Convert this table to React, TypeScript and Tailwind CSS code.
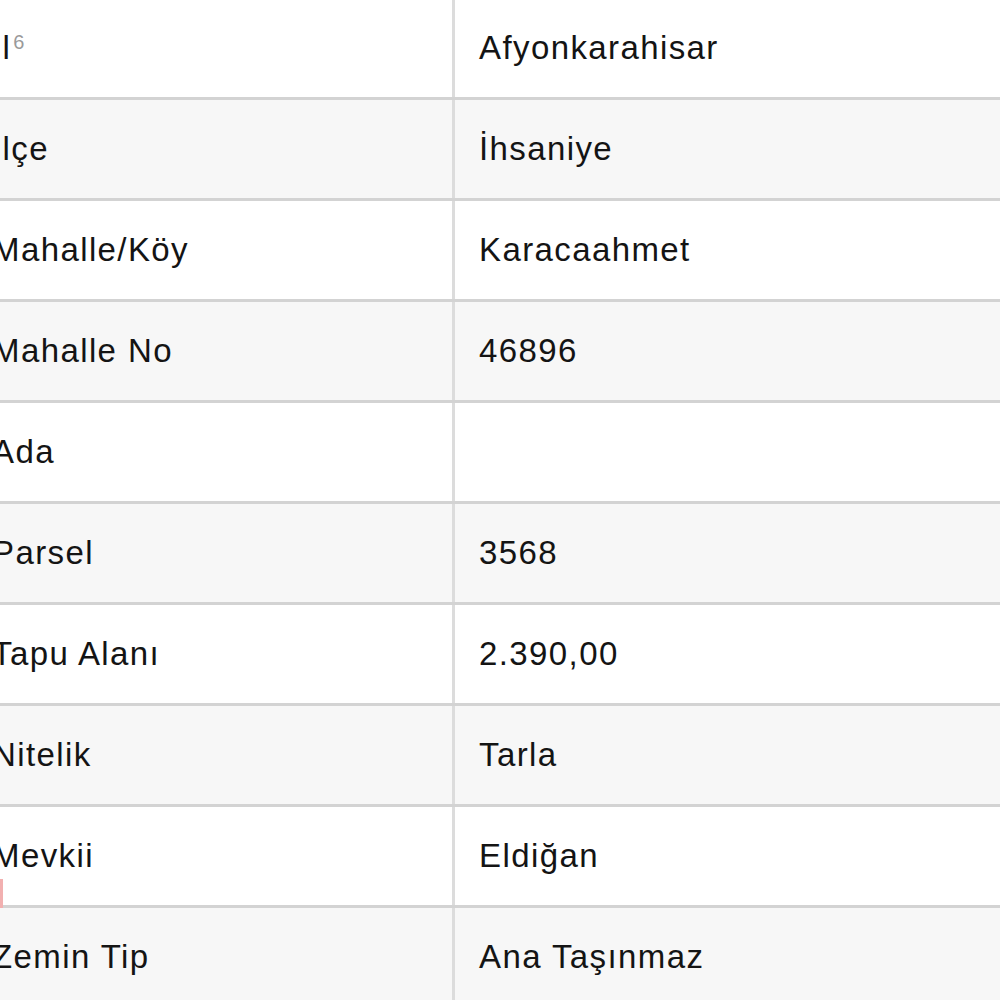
const rows: [string, string][] = [
  ["İl", "Afyonkarahisar"],
  ["İlçe", "İhsaniye"],
  ["Mahalle/Köy", "Karacaahmet"],
  ["Mahalle No", "46896"],
  ["Ada", ""],
  ["Parsel", "3568"],
  ["Tapu Alanı", "2.390,00"],
  ["Nitelik", "Tarla"],
  ["Mevkii", "Eldiğan"],
  ["Zemin Tip", "Ana Taşınmaz"],
];

export default function App() {
  return (
    <div className="w-[1000px] h-[1000px] overflow-hidden bg-white font-['Liberation_Sans',Arial,sans-serif] text-[33px] tracking-[1.4px] text-[#141414]">
      <div className="-mt-px">
        {rows.map(([label, value], i) => (
          <div
            key={label}
            className={
              "relative grid grid-cols-[455px_1fr] h-[101px] border-b-[3px] border-[#d3d3d3] " +
              (i % 2 === 1 ? "bg-[#f7f7f7]" : "bg-white")
            }
          >
            <div className="flex items-center border-r-[3px] border-[#dcdcdc]">
              <span className="-ml-2 whitespace-nowrap">
                {label}
                {i === 0 && (
                  <sup className="ml-[2px] text-[20px] tracking-normal text-[#9a9a9a]">6</sup>
                )}
              </span>
            </div>
            <div className="flex items-center pl-6">
              <span className="whitespace-nowrap">{value}</span>
            </div>
            {i === 8 && (
              <div className="absolute left-0 top-[72px] w-[3px] h-[30px] bg-[#f2b0b0]" />
            )}
          </div>
        ))}
      </div>
    </div>
  );
}
